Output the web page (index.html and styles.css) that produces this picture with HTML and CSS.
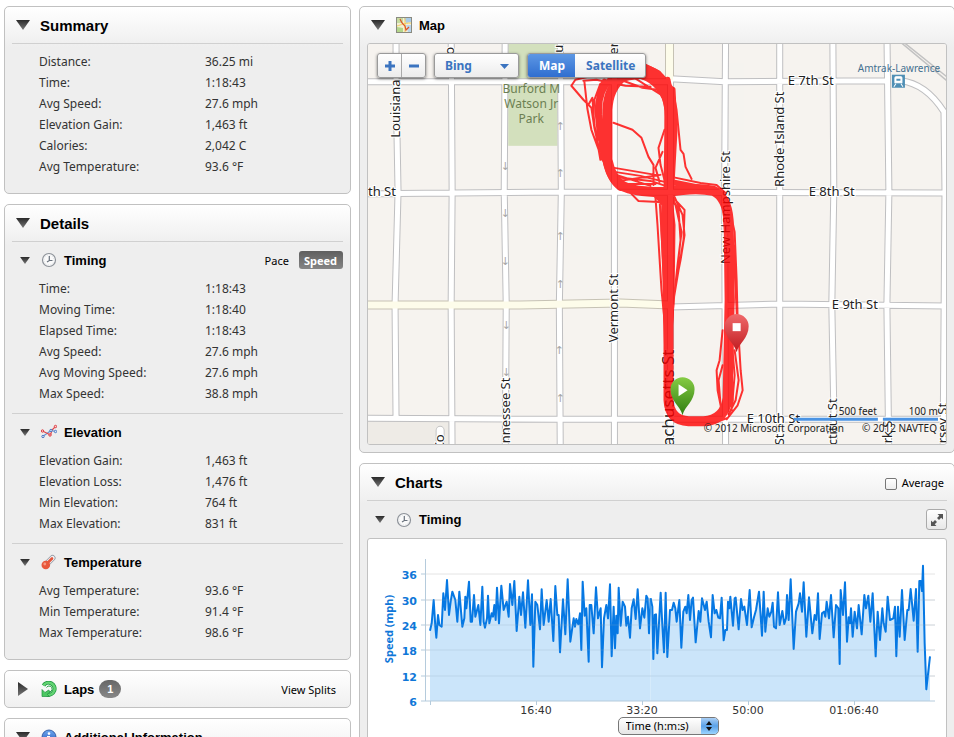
FILE: index.html
```html
<!DOCTYPE html>
<html lang="en">
<head>
  <meta charset="UTF-8">
  <title>Activity Details</title>
  <link rel="stylesheet" href="styles.css">
</head>
<body>
  <!-- shared symbols -->
  <svg class="defs" aria-hidden="true">
    <defs>
      <linearGradient id="triFill" x1="0" y1="0" x2="0" y2="1">
        <stop offset="0" stop-color="#2a2a2a"/><stop offset="1" stop-color="#777"/>
      </linearGradient>
      <linearGradient id="greenFill" x1="0" y1="0" x2="0" y2="1">
        <stop offset="0" stop-color="#86cc45"/><stop offset="1" stop-color="#2f7d10"/>
      </linearGradient>
      <linearGradient id="redFill" x1="0" y1="0" x2="0" y2="1">
        <stop offset="0" stop-color="#f0696b"/><stop offset="1" stop-color="#bf1a1e"/>
      </linearGradient>
      <linearGradient id="blueFill" x1="0" y1="0" x2="0" y2="1">
        <stop offset="0" stop-color="#6ea8f0"/><stop offset="1" stop-color="#2455b8"/>
      </linearGradient>
    </defs>
    <symbol id="down" viewBox="0 0 14 10"><path d="M0 0h14L7 10z" fill="url(#triFill)"/></symbol>
    <symbol id="right" viewBox="0 0 10 14"><path d="M0 0l10 7L0 14z" fill="url(#triFill)"/></symbol>
    <symbol id="clock" viewBox="0 0 16 16">
      <circle cx="8" cy="8" r="6.5" fill="#fafafa" stroke="#8d9299" stroke-width="1.2"/>
      <circle cx="8" cy="8" r="5" fill="none" stroke="#d9dde2" stroke-width="1" stroke-dasharray="1 1.6"/>
      <path d="M8.300 4v4.700M11.500 8.500H8.300L6 10" fill="none" stroke="#69727d" stroke-width="1.200"/>
    </symbol>
  </svg>

  <div class="page">
    <div class="column">
      <section class="panel">
        <header class="panel-head">
          <button class="toggle" aria-label="Summary"><svg width="14" height="10"><use href="#down"/></svg></button>
          <h2>Summary</h2>
        </header>
        <table class="stats first last">
          <tr><th>Distance:</th><td>36.25 mi</td></tr>
          <tr><th>Time:</th><td>1:18:43</td></tr>
          <tr><th>Avg Speed:</th><td>27.6 mph</td></tr>
          <tr><th>Elevation Gain:</th><td>1,463 ft</td></tr>
          <tr><th>Calories:</th><td>2,042 C</td></tr>
          <tr><th>Avg Temperature:</th><td>93.6 °F</td></tr>
        </table>
      </section>

      <section class="panel">
        <header class="panel-head">
          <button class="toggle" aria-label="Details"><svg width="14" height="10"><use href="#down"/></svg></button>
          <h2>Details</h2>
        </header>

        <div class="sub">
          <div class="sub-head">
            <button class="toggle small" aria-label="Timing"><svg width="10" height="7"><use href="#down"/></svg></button>
            <svg class="icon" width="16" height="16"><use href="#clock"/></svg>
            <h3>Timing</h3>
            <div class="pace">
              <button>Pace</button>
              <button class="active">Speed</button>
            </div>
          </div>
          <table class="stats">
            <tr><th>Time:</th><td>1:18:43</td></tr>
            <tr><th>Moving Time:</th><td>1:18:40</td></tr>
            <tr><th>Elapsed Time:</th><td>1:18:43</td></tr>
            <tr><th>Avg Speed:</th><td>27.6 mph</td></tr>
            <tr><th>Avg Moving Speed:</th><td>27.6 mph</td></tr>
            <tr><th>Max Speed:</th><td>38.8 mph</td></tr>
          </table>
        </div>

        <div class="sub">
          <div class="sub-head">
            <button class="toggle small" aria-label="Elevation"><svg width="10" height="7"><use href="#down"/></svg></button>
            <svg class="icon" width="16" height="16" viewBox="0 0 16 16">
              <path d="M1.500 12.500L6 9.500l4-3 4.500 1" fill="none" stroke="#6a94d4" stroke-width="1.200"/>
              <path d="M1.500 7l5 2.500 3 1.500 1.500-5 3.500-3.500" fill="none" stroke="#e0454a" stroke-width="1.200"/>
              <g fill="#dbe8fa" stroke="#4a78c4"><circle cx="2" cy="12.500" r="1.200"/><circle cx="10" cy="6.500" r="1.200"/><circle cx="14.500" cy="7.500" r="1.200"/></g>
              <g fill="#fbd3d3" stroke="#dc3b40"><circle cx="1.500" cy="7" r="1.200"/><circle cx="9" cy="11" r="1.200"/><circle cx="14.500" cy="2.500" r="1.200"/></g>
            </svg>
            <h3>Elevation</h3>
          </div>
          <table class="stats">
            <tr><th>Elevation Gain:</th><td>1,463 ft</td></tr>
            <tr><th>Elevation Loss:</th><td>1,476 ft</td></tr>
            <tr><th>Min Elevation:</th><td>764 ft</td></tr>
            <tr><th>Max Elevation:</th><td>831 ft</td></tr>
          </table>
        </div>

        <div class="sub">
          <div class="sub-head">
            <button class="toggle small" aria-label="Temperature"><svg width="10" height="7"><use href="#down"/></svg></button>
            <svg class="icon" width="16" height="16" viewBox="0 0 16 16">
              <path d="M5 10.500L11.500 4" stroke="#979ca6" stroke-width="6" stroke-linecap="round"/>
              <path d="M5 10.500L11.500 4" stroke="#f3f3f5" stroke-width="4.400" stroke-linecap="round"/>
              <path d="M5 10.500L11 4.500" stroke="#e4573d" stroke-width="2.600" stroke-linecap="round"/>
              <circle cx="4.800" cy="11" r="4.300" fill="#e8583c"/>
              <circle cx="3.800" cy="10" r="1.400" fill="#f59a82"/>
            </svg>
            <h3>Temperature</h3>
          </div>
          <table class="stats last">
            <tr><th>Avg Temperature:</th><td>93.6 °F</td></tr>
            <tr><th>Min Temperature:</th><td>91.4 °F</td></tr>
            <tr><th>Max Temperature:</th><td>98.6 °F</td></tr>
          </table>
        </div>
      </section>

      <section class="panel">
        <header class="panel-head closed">
          <button class="toggle" aria-label="Laps"><svg width="10" height="14"><use href="#right"/></svg></button>
          <svg class="icon" width="16" height="16" viewBox="0 0 16 16">
            <path d="M2.500 4.500A6 6 0 1 1 6 13.500" fill="none" stroke="#1f9440" stroke-width="4"/>
            <path d="M2.500 4.500A6 6 0 1 1 6 13.500" fill="none" stroke="#62d472" stroke-width="2.600"/>
            <path d="M5.500 6.500A3 3 0 1 1 8 11" fill="none" stroke="#2aa549" stroke-width="1"/>
            <path d="M1 8.500v7h7.500l-2.300-2.300 3-2.200-1.500-2-3.700 2.500z" fill="#4cc862" stroke="#1f9440" stroke-width=".7"/>
          </svg>
          <h3>Laps</h3>
          <span class="badge">1</span>
          <a class="splits" href="#splits">View Splits</a>
        </header>
      </section>

      <section class="panel">
        <header class="panel-head">
          <button class="toggle" aria-label="Additional Information"><svg width="14" height="10"><use href="#down"/></svg></button>
          <svg class="icon" width="16" height="16" viewBox="0 0 16 16">
            <circle cx="8" cy="8" r="7" fill="url(#blueFill)" stroke="#1f4796" stroke-width=".8"/>
            <circle cx="8" cy="4.600" r="1.300" fill="#fff"/>
            <path d="M6 7h3v4.500h1v1H6v-1h1V8H6z" fill="#fff"/>
          </svg>
          <h3>Additional Information</h3>
        </header>
      </section>
    </div>

    <div class="column">
      <section class="panel">
        <header class="panel-head map-head">
          <button class="toggle" aria-label="Map"><svg width="14" height="10"><use href="#down"/></svg></button>
          <svg class="icon" width="16" height="16" viewBox="0 0 16 16">
            <rect x=".5" y=".5" width="15" height="15" fill="#f3efd5" stroke="#8a8a80"/>
            <path d="M1 1h6v5H1z" fill="#c7dca0"/><path d="M8 1h7v4l-5 1z" fill="#a9cbe8"/>
            <path d="M1 10l6 1v4H1z" fill="#b4d68b"/><path d="M10 8h5v7h-3z" fill="#b9d5ec"/>
            <path d="M1 9c4-1 7-3 14-3M9 1v14" fill="none" stroke="#f2ce5c" stroke-width="1"/>
            <path d="M4 2l2 4 3 3 1 4 3-3" fill="none" stroke="#dd5426" stroke-width="1.200"/>
          </svg>
          <h3>Map</h3>
        </header>
        <div class="map">
          <svg class="map-canvas" viewBox="368 44 577 400" preserveAspectRatio="xMidYMid slice">
            <rect x="300" y="0" width="800" height="500" fill="#f6f3ef"/>
            <rect x="300" y="421" width="150" height="60" fill="#eeebe6"/>
            <rect x="508" y="30" width="49" height="116" fill="#d3e0bd"/>

            <!-- streets, outline first -->
            <g fill="none" stroke="#bfbfc1" stroke-width="7">
              <path id="minor" d="M396 30V82L398 192 395 305 396 419M451 30L452 192 451 305 452 460M505 30L504 192 506 305 505 460M560 30L561 192 559 305 560 460M614 30V460M670 80V460M725 30L724 192 725 460M779 30V460M832 30L833 192 831 305 834 460M886 30L888 192 886 305 888 460M360 82L560 82 670 82M670 79L724 82 885 81M360 194L560 192 953 193M670 307L780 304 953 306M360 418L560 419 953 419M900 81Q925 84 943 112L944 192 942 460"/>
            </g>
            <path d="M360 305H520L620 303 670 305M669 30V80" fill="none" stroke="#c6c2b4" stroke-width="9"/>
            <use href="#minor" fill="none" stroke="#fff" stroke-width="5"/>
            <path d="M360 305H520L620 303 670 305M669 30V80" fill="none" stroke="#fdfcea" stroke-width="7"/>
            <path d="M436 460V430a4 4 0 0 1 8 0v30z" fill="#fff" stroke="#c4c4c4"/>
            <path d="M899 42l48 40M902 42l45 36" fill="none" stroke="#c2c2c2" stroke-width="1.500"/>

            <g class="arrows">
              <text x="560" y="130">↑</text><text x="560" y="177">↑</text><text x="560" y="240">↑</text><text x="560" y="288">↑</text><text x="559" y="354">↑</text><text x="560" y="402">↑</text>
              <text x="505" y="170">↓</text><text x="505" y="217">↓</text><text x="505" y="265">↓</text><text x="506" y="329">↓</text><text x="506" y="376">↓</text>
            </g>

            <g class="street">
              <text x="368" y="196">th St</text>
              <text x="787" y="85">E 7th St</text>
              <text x="808" y="196">E 8th St</text>
              <text x="831" y="309">E 9th St</text>
              <text x="746" y="423">E 10th St</text>
              <text transform="translate(400 138) rotate(-90)">Louisiana</text>
              <text transform="translate(454 55) rotate(-90)">o</text>
              <text transform="translate(563 53) rotate(-90)">u</text>
              <text transform="translate(618 55) rotate(-90)">er</text>
              <text transform="translate(510 443) rotate(-90)">nnessee St</text>
              <text transform="translate(618 342) rotate(-90)">Vermont St</text>
              <text transform="translate(729 264) rotate(-90)">New Hampshire St</text>
              <text transform="translate(783 187) rotate(-90)">Rhode Island St</text>
              <text transform="translate(783 445) rotate(-90)">St</text>
              <text transform="translate(836 445) rotate(-90)">ctitut St</text>
              <text transform="translate(891 443) rotate(-90)">rk S</text>
              <text transform="translate(946 443) rotate(-90)">rsey St</text>
              <text transform="translate(444 450) rotate(-90)">Co</text>
              <text class="big" transform="translate(673 446) rotate(-90)">achusetts St</text>
            </g>
            <g class="park">
              <text x="531" y="93">Burford M</text><text x="531" y="108">Watson Jr</text><text x="531" y="123">Park</text>
            </g>
            <text class="station" x="898" y="72">Amtrak-Lawrence</text>
            <rect x="891" y="75" width="13" height="13" fill="#4f8fb5"/>
            <path d="M895 77h5a1 1 0 0 1 1 1v5h-7v-5a1 1 0 0 1 1-1zM895 84l-2 3M900 84l2 3" fill="#fff" stroke="#fff"/>
            <path d="M895.500 79h4v2h-4z" fill="#4f8fb5"/>

            <!-- recorded track -->
            <g class="track">
              <path class="core" d="M668 192L669 120Q670 92 655 80Q640 70 622 77Q608 88 607 110V160Q611 180 622 186Q635 193 668 192Q695 187 713 191Q726 197 728 220L729 300 727 398Q724 420 703 421H688Q669 420 668 400V192"/>
              <path class="mid" d="M668 192L667 110Q664 84 640 76L610 80Q597 92 599 115L604 155Q608 180 620 188L650 190 666 205 665 300 668 390M669 198L672 225 671 300 668 350M725 212L731 300 727 350 730 400 722 415"/>
              <path class="mid" d="M670 182L700 188 718 192 726 210M672 90L674 130 671 185M645 68Q664 73 671 95M604 82Q597 95 598 115L602 150 609 172M667 80L671 100M664 198L663 230 666 300"/>
              <path class="thin" d="M592 76L575 80 571 86 583 100 591 108 594 128 600 155 610 175M583 81L596 80 615 84M584 82L587 109 591 130 602 160M613 123L632 130 641 138 648 157 653 165 653 185M645 65L659 72 672 88 676 110 680 150 683 154 685 167 691 179M671 177L700 183 716 185 725 193M614 168L655 175M614 172L640 176 668 183M614 177L650 181 665 186M618 181L660 175M620 184L655 184M616 175L650 186M630 193L638 201 658 202 668 208M655 198L657 225 661 290 667 350M659 198L662 250 666 330M674 197L682 215 684 235 680 260 674 290 671 330M671 197L678 210 680 240 675 285M671 196L684 210 683 240 673 300M666 196L675 205 681 232 677 265 670 330M664 130L658 148 660 165 664 180M662 152L655 168 659 182M620 80L642 88 657 90 665 102M610 83L625 86 650 87M632 77L662 96M598 90L600 115 604 150M588 105L592 98 594 125 600 160M600 84L594 100 598 140M727 200L734 232 736 280 737 320 740 370 742 390 737 405 726 419M729 210L733 250 737 330M722 330L719 360 716 370 717 390 721 410M722 365L718 380 720 405M734 350L738 380 735 400 728 414M731 340L734 375 731 410M727 345L729 380 724 412M674 416L690 422 712 423 726 418"/>
            </g>

            <!-- start and finish pins -->
            <path d="M682 415C680 406 670 401 670 389a12 12 0 0 1 24 0C694 401 684 406 682 415z" fill="url(#greenFill)"/>
            <path d="M678 384v12l9-6z" fill="#fff"/>
            <path d="M736 352C734 343 724 338 724 326a12 12 0 0 1 24 0C748 338 738 343 736 352z" fill="url(#redFill)"/>
            <rect x="732" y="323" width="8" height="8" fill="#fff"/>

            <path d="M793 419h84M882 419h55" stroke="#4a93e3" stroke-width="3"/>
            <g class="credit">
              <text x="876" y="415">500 feet</text><text x="937" y="415">100 m</text>
              <text x="843" y="432">© 2012 Microsoft Corporation</text><text x="936" y="432">© 2012 NAVTEQ</text>
            </g>
          </svg>

          <div class="map-tools">
            <div class="group zoom">
              <button aria-label="Zoom in"><svg width="12" height="12"><path d="M6 1v10M1 6h10" stroke="#3b74c0" stroke-width="3"/></svg></button>
              <button aria-label="Zoom out"><svg width="12" height="12"><path d="M1 6h10" stroke="#3b74c0" stroke-width="3"/></svg></button>
            </div>
            <div class="group provider">
              <select aria-label="Map provider"><option>Bing</option><option>Google</option></select>
              <svg width="9" height="5"><path d="M0 0h9L4.500 5z" fill="#3b74c0"/></svg>
            </div>
            <div class="group">
              <button class="map-type active">Map</button>
              <button class="map-type">Satellite</button>
            </div>
          </div>
        </div>
      </section>

      <section class="panel">
        <header class="panel-head">
          <button class="toggle" aria-label="Charts"><svg width="14" height="10"><use href="#down"/></svg></button>
          <h2>Charts</h2>
          <label class="average"><input type="checkbox">Average</label>
        </header>
        <div class="sub-head">
          <button class="toggle small" aria-label="Timing chart"><svg width="10" height="7"><use href="#down"/></svg></button>
          <svg class="icon" width="16" height="16"><use href="#clock"/></svg>
          <h3>Timing</h3>
          <button class="expand" aria-label="Expand chart">
            <svg width="14" height="14" fill="#555"><path d="M7.500 1H13v5.500l-1.800-1.800L9 7 7 5l2.300-2.200zM1 7.500l1.800 1.800L5 7l2 2-2.300 2.200L6.500 13H1z"/></svg>
          </button>
        </div>
        <div class="chart">
          <svg class="chart-canvas" viewBox="368 539 578 178">
            <path d="M426 574H935M426 600H935M426 625H935M426 650H935M426 676H935" stroke="#e4e4e4"/>
            <!-- speed samples -->
            <g transform="translate(355 455) scale(.33333)">
              <path class="area" d="M225 738V527L230 505 236 435 241 515 244 548 249 480 253 510 260 515 265 415 270 465 276 375 282 480 287 440 292 410 301 435 307 500 313 410 322 515 328 490 331 425 334 460 342 380 347 500 351 500 357 420 361 485 370 450 376 510 382 395 386 500 390 518 396 490 399 422 403 505 410 475 414 485 418 450 422 495 426 398 432 505 439 392 446 465 455 440 461 485 465 387 472 450 478 378 485 528 493 425 498 480 504 412 511 518 519 376 526 510 531 418 535 635 541 440 547 450 555 523 560 403 566 510 575 435 581 500 587 432 595 558 601 393 607 480 611 480 615 592 624 433 631 538 638 373 646 560 656 490 660 515 664 492 670 508 675 475 679 585 683 380 689 482 694 460 701 620 704 450 709 450 716 535 723 397 729 490 737 460 741 637 747 490 754 450 759 490 765 388 770 604 776 455 780 580 784 482 788 535 791 398 797 512 803 440 810 455 814 512 819 485 825 548 830 460 836 433 842 492 848 403 855 520 862 460 868 488 874 422 878 430 882 535 887 430V738z"/>
              <path class="line" d="M225 527L230 505 236 435 241 515 244 548 249 480 253 510 260 515 265 415 270 465 276 375 282 480 287 440 292 410 301 435 307 500 313 410 322 515 328 490 331 425 334 460 342 380 347 500 351 500 357 420 361 485 370 450 376 510 382 395 386 500 390 518 396 490 399 422 403 505 410 475 414 485 418 450 422 495 426 398 432 505 439 392 446 465 455 440 461 485 465 387 472 450 478 378 485 528 493 425 498 480 504 412 511 518 519 376 526 510 531 418 535 635 541 440 547 450 555 523 560 403 566 510 575 435 581 500 587 432 595 558 601 393 607 480 611 480 615 592 624 433 631 538 638 373 646 560 656 490 660 515 664 492 670 508 675 475 679 585 683 380 689 482 694 460 701 620 704 450 709 450 716 535 723 397 729 490 737 460 741 637 747 490 754 450 759 490 765 388 770 604 776 455 780 580 784 482 788 535 791 398 797 512 803 440 810 455 814 512 819 485 825 548 830 460 836 433 842 492 848 403 855 520 862 460 868 488 874 422 878 430 882 535 887 430"/>
              <g transform="translate(885)">
                <path class="area" d="M2 738V430L7 455 10 612 14 480 18 478 22 595 32 413 37 510 42 592 47 413 52 606 60 465 66 465 71 443 76 460 80 500 88 435 94 578 100 470 106 455 110 475 115 420 120 495 125 435 129 428 137 562 146 468 151 500 156 430 165 465 170 440 176 500 183 547 188 420 194 475 199 465 205 488 210 490 215 428 221 556 226 525 231 525 234 440 238 460 241 425 249 512 254 430 257 428 266 523 273 432 278 465 283 455 291 510 299 405 305 517 312 487 318 465 327 410 336 542 341 410 346 530 353 460 358 485 364 470 368 443 372 515 378 520 384 412 389 510 397 468 403 507 408 490 411 420 416 495 422 373 431 582 438 470 446 445 450 415 456 470 461 382 469 545 477 427 487 535 494 480 499 495 504 415 509 552 516 475 522 470 526 485 530 440 537 490 543 420 551 547 558 450 565 460 569 627 572 405 579 480 585 382 591 560 596 487 600 505 603 460 608 545 614 470 621 520 626 450 635 538 643 420 648 460 655 422 661 500 668 415 677 604 683 470 690 555 697 460 701 505 707 530 713 425 720 495 730 490 735 455 739 604 744 455 749 545 756 405 764 555 772 465 776 465 782 402 791 497 798 402 803 590 808 378 812 378 816 408 819 332 824 565 829 703 840 604V738z"/>
                <path class="line" d="M2 430L7 455 10 612 14 480 18 478 22 595 32 413 37 510 42 592 47 413 52 606 60 465 66 465 71 443 76 460 80 500 88 435 94 578 100 470 106 455 110 475 115 420 120 495 125 435 129 428 137 562 146 468 151 500 156 430 165 465 170 440 176 500 183 547 188 420 194 475 199 465 205 488 210 490 215 428 221 556 226 525 231 525 234 440 238 460 241 425 249 512 254 430 257 428 266 523 273 432 278 465 283 455 291 510 299 405 305 517 312 487 318 465 327 410 336 542 341 410 346 530 353 460 358 485 364 470 368 443 372 515 378 520 384 412 389 510 397 468 403 507 408 490 411 420 416 495 422 373 431 582 438 470 446 445 450 415 456 470 461 382 469 545 477 427 487 535 494 480 499 495 504 415 509 552 516 475 522 470 526 485 530 440 537 490 543 420 551 547 558 450 565 460 569 627 572 405 579 480 585 382 591 560 596 487 600 505 603 460 608 545 614 470 621 520 626 450 635 538 643 420 648 460 655 422 661 500 668 415 677 604 683 470 690 555 697 460 701 505 707 530 713 425 720 495 730 490 735 455 739 604 744 455 749 545 756 405 764 555 772 465 776 465 782 402 791 497 798 402 803 590 808 378 812 378 816 408 819 332 824 565 829 703 840 604"/>
              </g>
            </g>
            <path d="M426 600H935M426 625H935M426 650H935M426 676H935" stroke="#8fa9bf" stroke-opacity=".25"/>
            <path d="M425.500 559V701M421 701H935M421 574h5M421 600h5M421 625h5M421 650h5M421 676h5M430.500 701v4M536.500 701v4M642.500 701v4M748.500 701v4M854.500 701v4" fill="none" stroke="#b5cbdc"/>
            <g class="y-axis">
              <text x="417" y="579">36</text><text x="417" y="605">30</text><text x="417" y="630">24</text>
              <text x="417" y="655">18</text><text x="417" y="681">12</text><text x="417" y="706">6</text>
              <text class="axis-title" transform="translate(393 629) rotate(-90)">Speed (mph)</text>
            </g>
            <g class="x-axis">
              <text x="536" y="714">16:40</text><text x="642" y="714">33:20</text><text x="748" y="714">50:00</text><text x="854" y="714">01:06:40</text>
            </g>
          </svg>
          <div class="axis-picker">
            <div class="picker">
              <select aria-label="Horizontal axis"><option>Time (h:m:s)</option><option>Distance</option></select>
              <svg width="17" height="16"><path d="M5 7l3-4 3 4zM5 9h6l-3 4z" fill="#111"/></svg>
            </div>
          </div>
        </div>
      </section>
    </div>
  </div>
</body>
</html>
```
FILE: styles.css
```css
* { box-sizing: border-box; }
body { margin: 0; background: #fff; color: #333; font-family: "Noto Sans", "Lucida Grande", sans-serif; font-size: 12px; }
button, select { font: inherit; color: inherit; margin: 0; padding: 0; border: none; background: none; cursor: pointer; }
svg { display: block; }
.defs { position: absolute; width: 0; height: 0; }

.page {
  display: grid;
  grid-template-columns: 347px minmax(0, 1fr);
  gap: 8px;
  height: 100vh;
  padding: 6px 0 0 4px;
  overflow: hidden;
}
.column { display: flex; flex-direction: column; gap: 10px; }
.column + .column { margin-right: -1px; }

/* panels */
.panel { flex: none; border: 1px solid #c1c1c1; border-radius: 5px; background: #eee linear-gradient(#fff, #eee) no-repeat 0 0 / 100% 40px; }
.panel-head { display: flex; align-items: center; height: 37px; margin: 0 7px; padding-left: 4px; border-bottom: 1px solid #d0d0d0; }
.panel-head.closed, .panel-head.map-head { height: 36px; border-bottom: none; }
h2, h3 { margin: 0; color: #000; font-family: "Liberation Sans", Arial, sans-serif; font-weight: bold; }
h2 { font-size: 15px; }
h3 { font-size: 13px; }
.toggle { flex: none; display: flex; align-items: center; width: 24px; height: 20px; }
.toggle.small { width: 20px; }
.closed .toggle { padding-left: 2px; }
.icon { flex: none; margin: 0 7px 0 1px; }

.sub { margin: 0 7px; border-top: 1px solid #d0d0d0; }
.panel-head + .sub { border-top: none; }
.sub-head { display: flex; align-items: center; height: 36px; padding-left: 8px; }
.panel > .sub-head { margin: 0 7px; height: 37px; }

/* figures */
.stats { width: 100%; margin-bottom: 9px; border-collapse: collapse; table-layout: fixed; }
.stats th, .stats td { height: 21px; padding: 0; text-align: left; font-weight: normal; }
.stats th { width: 193px; padding-left: 27px; }
.stats.first { margin: 7px 7px 0; width: auto; }
.stats.last { margin-bottom: 16px; }

.pace { display: flex; gap: 10px; margin-left: auto; font-size: 11px; color: #000; }
.pace button { height: 18px; }
.pace .active { padding: 0 6px 0 5px; border-radius: 3px; background: linear-gradient(#5f5f5f, #858585); color: #fff; font-weight: bold; }
.badge { margin-left: 5px; width: 22px; height: 18px; border-radius: 9px; background: linear-gradient(#666, #888); color: #fff; font: bold 11px/18px "Liberation Sans", Arial, sans-serif; text-align: center; }
.splits { margin-left: auto; padding-right: 7px; color: #000; font-size: 11px; text-decoration: none; }

/* map */
.map { position: relative; margin: 0 7px 7px; border: 1px solid #c1c1c1; border-radius: 3px; overflow: hidden; }
.map-canvas { width: 100%; height: 400px; }
.map-tools { position: absolute; top: 9px; left: 9px; display: flex; gap: 8px; }
.group { display: flex; height: 25px; border: 1px solid #9a9a9a; border-radius: 3px; background: linear-gradient(#fff, #ececec); box-shadow: 0 1px 3px rgba(0, 0, 0, 0.5); color: #3b74c0; font-weight: bold; overflow: hidden; }
.zoom button { display: flex; align-items: center; justify-content: center; width: 23px; }
.zoom button + button { width: 24px; border-left: 1px solid #aaa; }
.provider { position: relative; width: 85px; }
.provider select { appearance: none; width: 100%; padding-left: 10px; }
.provider svg { position: absolute; right: 9px; top: 10px; pointer-events: none; }
.map-type { padding: 0 10px 0 11px; }
.map-type.active { background: linear-gradient(#5d97e4, #2f6ed0); color: #fff; }

.street { fill: #222; font-size: 13px; stroke: #fff; stroke-width: 2px; paint-order: stroke; }
.street .big { font-size: 17px; }
.arrows { fill: #a8a8a8; font: 11px "DejaVu Sans", sans-serif; text-anchor: middle; }
.park { fill: #6c7f52; font-size: 12px; text-anchor: middle; }
.station { fill: #44708f; font-size: 10px; text-anchor: middle; }
.track { fill: none; stroke: #f00; stroke-linejoin: round; stroke-linecap: round; opacity: 0.8; }
.core { stroke-width: 10px; }
.mid { stroke-width: 6px; }
.thin { stroke-width: 2px; }
.credit { fill: #222; font-size: 10px; text-anchor: end; }

/* charts */
.average { display: flex; align-items: center; gap: 5px; margin-left: auto; padding-right: 3px; color: #000; font-size: 11px; }
.average input { appearance: none; width: 12px; height: 12px; margin: 4px 0 0; border: 1px solid #777; border-radius: 2px; background: linear-gradient(#fff, #eee); }
.expand { display: flex; align-items: center; justify-content: center; width: 21px; height: 21px; margin-left: auto; border: 1px solid #aaa; border-radius: 3px; background: linear-gradient(#fff, #e8e8e8); }
.chart { margin: 0 7px 8px; border: 1px solid #c1c1c1; border-radius: 3px; background: #fff; }
.chart-canvas { width: 100%; height: auto; }
.area { fill: #cbe5fa; }
.line { fill: none; stroke: #0678e3; stroke-width: 6px; stroke-linejoin: round; }
.y-axis { fill: #0f77d8; font: bold 11px "DejaVu Sans", sans-serif; text-anchor: end; }
.y-axis .axis-title { text-anchor: middle; font: bold 11px "Noto Sans", sans-serif; }
.x-axis { fill: #333; font: 11px "DejaVu Sans", sans-serif; text-anchor: middle; }
.axis-picker { display: flex; justify-content: center; padding: 0 0 16px 22px; }
.picker { position: relative; width: 101px; height: 18px; border: 1px solid #777; border-radius: 5px; background: linear-gradient(#fff, #e6e6e6); overflow: hidden; }
.picker select { display: block; appearance: none; width: 100%; height: 16px; padding-left: 7px; color: #000; font-size: 11px; line-height: 16px; }
.picker svg { position: absolute; top: 0; right: 0; background: linear-gradient(#a9cef5, #5ba2e8 50%, #9bd4ff); pointer-events: none; }
```
